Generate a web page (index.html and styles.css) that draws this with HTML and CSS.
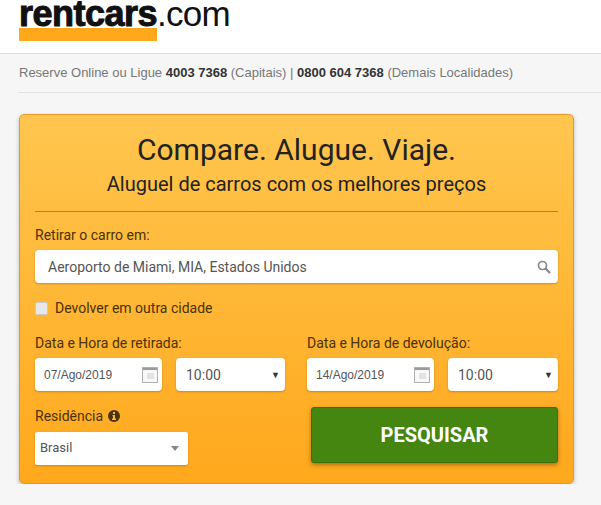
FILE: index.html
```html
<!DOCTYPE html>
<html>
<head>
    <title>Rentcars</title>
    <link rel="stylesheet" href="styles.css">
</head>
<body>
    <header class="topo">
        <div class="logo">
            <div class="logo-texto"><b>rentcars</b><span>.com</span></div>
            <div class="logo-barra"></div>
        </div>
    </header>

    <div class="conteudo">
        <p class="contato">Reserve Online ou Ligue <b>4003 7368</b> (Capitais) | <b>0800 604 7368</b> (Demais Localidades)</p>

        <form class="busca">
            <h1>Compare. Alugue. Viaje.</h1>
            <h2>Aluguel de carros com os melhores preços</h2>

            <label class="rotulo">Retirar o carro em:</label>
            <div class="campo campo-local">
                <span>Aeroporto de Miami, MIA, Estados Unidos</span>
                <svg class="lupa" width="14" height="14" viewBox="0 0 14 14">
                    <circle cx="5.5" cy="5.5" r="4" fill="none" stroke="#8a8a8a" stroke-width="1.7"/>
                    <path d="M8.5 8.5L13 13" stroke="#8a8a8a" stroke-width="2.4"/>
                </svg>
            </div>

            <div class="devolver">
                <span class="check"></span>
                <span>Devolver em outra cidade</span>
            </div>

            <div class="datas">
                <div class="grupo">
                    <label class="rotulo">Data e Hora de retirada:</label>
                    <div class="linha">
                        <div class="campo campo-data">
                            <span>07/Ago/2019</span>
                            <svg class="calendario" width="16" height="16" viewBox="0 0 16 16">
                                <rect x="0.5" y="0.5" width="15" height="15" fill="#f8f8f8" stroke="#b0b0b0"/>
                                <rect x="1" y="1" width="14" height="2" fill="#9a9a9a"/>
                                <path d="M5 7h7M5 9h7M5 11h7" stroke="#cfcfcf"/>
                            </svg>
                        </div>
                        <div class="campo campo-hora"><span>10:00</span><span class="seta">▼</span></div>
                    </div>
                </div>
                <div class="grupo grupo-dir">
                    <label class="rotulo">Data e Hora de devolução:</label>
                    <div class="linha">
                        <div class="campo campo-data">
                            <span>14/Ago/2019</span>
                            <svg class="calendario" width="16" height="16" viewBox="0 0 16 16">
                                <rect x="0.5" y="0.5" width="15" height="15" fill="#f8f8f8" stroke="#b0b0b0"/>
                                <rect x="1" y="1" width="14" height="2" fill="#9a9a9a"/>
                                <path d="M5 7h7M5 9h7M5 11h7" stroke="#cfcfcf"/>
                            </svg>
                        </div>
                        <div class="campo campo-hora"><span>10:00</span><span class="seta">▼</span></div>
                    </div>
                </div>
            </div>

            <div class="rodape">
                <div class="residencia">
                    <label class="rotulo">Residência
                        <svg class="info" width="12" height="12" viewBox="0 0 12 12">
                            <circle cx="6" cy="6" r="6" fill="#4a3410"/>
                            <rect x="5" y="2" width="2" height="2" fill="#ffb52e"/>
                            <path d="M4.5 5h2.5v3.6h1V10h-4V8.6h1V6.2h-.5z" fill="#ffb52e"/>
                        </svg>
                    </label>
                    <div class="campo campo-pais"><span>Brasil</span><span class="seta-pais"></span></div>
                </div>
                <button type="button" class="pesquisar">PESQUISAR</button>
            </div>
        </form>
    </div>
</body>
</html>
```

FILE: styles.css
```css
body {
    font-family: Roboto, Arial, sans-serif;
    margin: 0;
    padding: 0;
    background-color: #f6f6f6;
    color: #333;
    overflow: hidden;
}

.topo {
    height: 53px;
    background-color: #fff;
    border-bottom: 1px solid #dcdcdc;
    padding-left: 19px;
}

.logo {
    width: 212px;
}

.logo-texto {
    font-family: "Liberation Sans", Arial, sans-serif;
    font-size: 36px;
    line-height: 28px;
    color: #111;
    white-space: nowrap;
}

.logo-texto b {
    font-weight: 700;
    letter-spacing: -0.5px;
    -webkit-text-stroke: 1px #111;
}

.logo-texto span {
    font-size: 35px;
    letter-spacing: -0.8px;
}

.logo-barra {
    width: 138px;
    height: 13px;
    background-color: #ffa81c;
}

.conteudo {
    padding-left: 19px;
}

.contato {
    margin: 0 0 21px -1px;
    padding-left: 1px;
    height: 39px;
    line-height: 38px;
    font-family: "Liberation Sans", Arial, sans-serif;
    font-size: 13px;
    color: #777;
    border-bottom: 1px solid #e2e2e2;
    box-sizing: border-box;
    white-space: nowrap;
}

.contato b {
    color: #333;
}

.busca {
    width: 555px;
    height: 370px;
    box-sizing: border-box;
    padding: 0 15px;
    border: 1px solid #e09a2c;
    border-radius: 5px;
    background: linear-gradient(#ffc64f, #ffa81c);
    box-shadow: 0 2px 4px rgba(0, 0, 0, 0.25);
    color: #4a3208;
}

h1 {
    margin: 0;
    padding-top: 17px;
    font-size: 30px;
    line-height: 36px;
    font-weight: 400;
    text-align: center;
    color: #222;
}

h2 {
    margin: 0;
    padding: 4px 0 15px;
    font-size: 20px;
    line-height: 24px;
    font-weight: 400;
    text-align: center;
    color: #222;
    border-bottom: 1px solid #b5822b;
}

.rotulo {
    display: block;
    font-size: 14px;
    line-height: 16px;
    margin-bottom: 7px;
}

.busca > .rotulo {
    margin-top: 15px;
}

.campo {
    display: flex;
    align-items: center;
    justify-content: space-between;
    height: 33px;
    box-sizing: border-box;
    background-color: #fff;
    border-radius: 4px;
    color: #555;
    box-shadow: 0 1px 2px rgba(120, 80, 0, 0.4);
}

.campo-local {
    padding: 0 7px 0 13px;
    font-size: 14px;
}

.devolver {
    display: flex;
    align-items: center;
    gap: 7px;
    margin: 17px 0 19px;
    font-size: 14px;
    line-height: 16px;
}

.check {
    width: 13px;
    height: 13px;
    box-sizing: border-box;
    background-color: #e8e8e8;
    border: 1px solid #c9c9c9;
    border-radius: 2px;
}

.datas {
    display: flex;
    justify-content: space-between;
}

.grupo {
    width: 250px;
}

.grupo-dir {
    width: 251px;
}

.linha {
    display: flex;
    gap: 14px;
}

.campo-data {
    width: 127px;
    padding: 0 4px 0 9px;
    font-family: "Liberation Sans", Arial, sans-serif;
    font-size: 12px;
}

.campo-hora {
    flex: 1;
    padding: 0 5px 0 10px;
    font-size: 14px;
}

.seta {
    font-size: 9px;
    color: #333;
}

.rodape {
    display: flex;
    justify-content: space-between;
    margin-top: 16px;
}

.residencia {
    width: 153px;
    padding-top: 1px;
}

.residencia .rotulo {
    margin-bottom: 8px;
}

.info {
    vertical-align: -1px;
    margin-left: 1px;
}

.campo-pais {
    padding: 0 9px 3px 5px;
    font-size: 13px;
    border-radius: 2px;
}

.seta-pais {
    width: 0;
    height: 0;
    border-left: 4px solid transparent;
    border-right: 4px solid transparent;
    border-top: 5px solid #888;
    margin-top: 3px;
}

.pesquisar {
    width: 247px;
    height: 56px;
    padding: 0;
    border: 1px solid #3b6f0c;
    border-radius: 3px;
    background-color: #44860f;
    box-shadow: 0 2px 4px rgba(90, 60, 0, 0.5);
    color: #fff;
    font-family: Roboto, Arial, sans-serif;
    font-size: 20px;
    font-weight: 700;
}
```
